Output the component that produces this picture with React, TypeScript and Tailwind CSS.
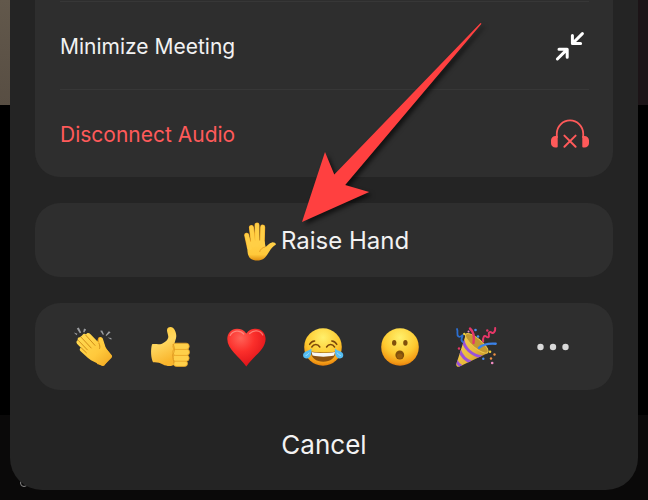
import type { ReactNode } from "react";

function MinimizeIcon() {
  return (
    <svg
      width="38"
      height="38"
      viewBox="0 0 38 38"
      fill="none"
      stroke="#fff"
      strokeWidth="3"
      strokeLinecap="round"
      strokeLinejoin="round"
      aria-hidden="true"
    >
      <path d="M31.4 5.6 22 15M21.4 7.4v8.1h8.2" />
      <path d="M6.4 31 15.8 21.6M8 21.2h8.2v8.1" />
    </svg>
  );
}

function HeadphonesOffIcon() {
  return (
    <svg width="38" height="38" viewBox="0 0 38 38" fill="none" aria-hidden="true">
      <path
        d="M5.8 22v-4.4a13.2 13.2 0 0 1 26.4 0V22"
        stroke="#ff5a5a"
        strokeWidth="1.8"
      />
      <path
        d="M6.7 20H4.5A4.5 4.5 0 0 0 0 24.5v2.7a4.4 4.4 0 0 0 4.4 4.4h1.3a1 1 0 0 0 1-1ZM31.3 20h2.2a4.5 4.5 0 0 1 4.5 4.5v2.7a4.4 4.4 0 0 1-4.4 4.4h-1.3a1 1 0 0 1-1-1Z"
        fill="#ff5a5a"
      />
      <path
        d="m13.4 19.6 11.2 11.2M24.6 19.6 13.4 30.8"
        stroke="#ff5a5a"
        strokeWidth="2"
        strokeLinecap="round"
      />
    </svg>
  );
}

function RaisedHand() {
  return (
    <svg width="34" height="40" viewBox="0 0 34 40" aria-hidden="true">
      <defs>
        <linearGradient id="palm" x1="0" y1="0" x2="0" y2="1">
          <stop offset="0" stopColor="#ffd24a" />
          <stop offset="0.7" stopColor="#ffc83a" />
          <stop offset="1" stopColor="#e09010" />
        </linearGradient>
      </defs>
      <g stroke="#eca524" strokeLinecap="round" strokeWidth="5">
        <path d="m3.7 14.2 2.6 12M8.4 6.4l2 17M14 4l.2 18M19.7 6l-.5 18" />
      </g>
      <path
        d="M4 22c2-2 15-3.5 17.6-1.5l1 5.5c2-1.5 3.4-4 6.4-4.6 2.2-.3 4.6 1.2 3.7 2.4-2.6 1.8-4.4 3.5-6.4 6.7-3 5-5.3 9-12.3 9-6.5 0-9-3.5-9.5-9Z"
        fill="url(#palm)"
      />
      <g stroke="#ffcf46" strokeLinecap="round" strokeWidth="4">
        <path d="m3.7 14.2 3 13M8.4 6.4l2.2 18M14 4l.2 20M19.7 6l-.6 19" />
      </g>
      <path d="M22.2 26c-3 .5-5 2.500-5.600 5" fill="none" stroke="#e9a124" />
    </svg>
  );
}

function Clap() {
  return (
    <>
      <defs>
        <linearGradient id="clap" x1="0" y1="0" x2="1" y2="1">
          <stop offset="0" stopColor="#ffdc55" />
          <stop offset="0.6" stopColor="#ffc93c" />
          <stop offset="1" stopColor="#f0a51f" />
        </linearGradient>
      </defs>
      <path
        d="M23 19 25 11.6c1-2.200 3.600-1.800 4.200.2L32 20l6.400 8.500-7.400 10.500-7-2Z"
        fill="#e9a01c"
      />
      <path
        d="M9.500 8c.8-1.600 2.400-1.700 3.600-.8 1-1.700 3-1.600 4.200-.3l9.200 9.600c-.6-2.500-.9-4.500-.1-5.500 1.200-1.300 3-.6 3.600 1.200l2 6.300c.5 2 1.500 3.700 3 5.300l3.600 4.300c.8 1 .6 2-.2 3l-7 7c-1 1-2 1-3.200.3-4-2.300-9.300-4-13.500-7.600L7.600 24.300c-1.500-1.500-.8-3.300.3-3.600L4.200 17c-1.400-1.400-.8-3.300.6-3.700-.7-2 .6-3.600 2.300-3Z"
        fill="url(#clap)"
      />
      <path
        d="m5.400 13.500 9 9.400M7.900 10 18.200 21M12.600 8l9.400 10.400M8.400 21l5 4.800M26 16.400c1 2 1 3.500.6 5"
        fill="none"
        stroke="#d18d18"
        strokeLinecap="round"
      />
      <path
        d="m.8 5.600 3.600 1.200-.8 1.400ZM3.800 1.600l2-1L8.200 5.600l-1.400.6ZM11 1.600l2.200.8-2 3-1-.4ZM27.200 3.800l2-.2 1.800 4-1.200.2ZM35.800 4.200l1.800 1-4.200 3.800-.8-.8ZM34.600 10.400l3.800.6v1.800Z"
        fill="#9b9da0"
      />
    </>
  );
}

function ThumbsUp() {
  return (
    <>
      <defs>
        <linearGradient id="thumb" x1="0" y1="0" x2="0.3" y2="1">
          <stop offset="0" stopColor="#ffc832" />
          <stop offset="0.5" stopColor="#ffd760" />
          <stop offset="1" stopColor="#f9b52c" />
        </linearGradient>
      </defs>
      <path
        d="M2 17.3c3-.6 7 .6 10-.6 3.500-2 6.300-4 6.300-7 0-2-1.300-4.500-1.300-6.500C17 1 18.500 0 20.500 0c3.500 0 5.800 5 5.800 9 0 3.200-1.800 5.400-1.800 8.500v19.500c-2 3-8 2.300-11.500.5-3.500-1.900-6-2.500-10-2.200-2-4-2.600-12-1-18Z"
        fill="url(#thumb)"
      />
      <g fill="#ffd04a" stroke="#e8a325" strokeWidth="0.8">
        <rect x="23.5" y="33.6" width="14" height="5.8" rx="2.900" />
        <rect x="22.5" y="28" width="16.6" height="6.2" rx="3" />
        <rect x="22.5" y="22" width="17" height="6.4" rx="3.1" />
        <rect x="22.8" y="16.2" width="16.4" height="6.2" rx="3" />
      </g>
      <path d="M23 17c2 4 1.500 8-.4 11 1 3 .8 6 1.400 8.500" fill="none" stroke="#e09a22" />
    </>
  );
}

function Heart() {
  return (
    <>
      <defs>
        <radialGradient id="heart" cx="0.35" cy="0.25" r="0.8">
          <stop offset="0" stopColor="#ff6257" />
          <stop offset="0.45" stopColor="#fb2f2b" />
          <stop offset="1" stopColor="#dc1118" />
        </radialGradient>
      </defs>
      <path
        d="M20.3 6.600C18 2.900 14.800 1.700 11 1.700 5.300 1.700 1.300 6 1.300 12c0 10.400 11.600 17 19 27.400C27.700 29 39.600 22.400 39.600 12c0-6-4-10.300-9.800-10.300-3.700 0-7.100 1.200-9.500 4.900Z"
        fill="url(#heart)"
      />
      <path
        d="M4.200 8.400C6.500 3.400 14 2.400 17.800 7M23.600 6.600C27.500 2.600 34 3 36.800 8"
        fill="none"
        stroke="#ff9d91"
        strokeLinecap="round"
        strokeWidth="1.2"
        opacity="0.7"
      />
    </>
  );
}

function FaceBase() {
  return (
    <>
      <defs>
        <radialGradient id="face" cx="0.5" cy="0.25" r="0.75">
          <stop offset="0" stopColor="#fff06c" />
          <stop offset="0.6" stopColor="#fdc92f" />
          <stop offset="0.9" stopColor="#f39a16" />
          <stop offset="1" stopColor="#e17d0b" />
        </radialGradient>
      </defs>
      <circle cx="20" cy="20" r="18.8" fill="url(#face)" />
    </>
  );
}

function TearsOfJoy() {
  return (
    <>
      <FaceBase />
      <path
        d="M8.800 20c2-3.200 6-3.200 8 0M23.600 20c2-3.200 6-3.200 8 0M6.600 17.400c1-1.700 3-3.100 5-3.300M33.800 17.400c-1-1.700-3-3.100-5-3.300"
        fill="none"
        stroke="#7c4709"
        strokeLinecap="round"
        strokeWidth="1.5"
      />
      <path
        d="M7.600 24.500c8 1.400 17.500 1.400 25.300 0-.3 6.200-5.600 10.300-12.600 10.300S7.900 30.700 7.600 24.500Z"
        fill="#8c5210"
      />
      <path d="M8.600 25c7 1.400 16.600 1.400 23.400 0l-.9 3.600c-6.500 1.400-15 1.400-21.600 0Z" fill="#f8f7f3" />
      <path
        d="M8.300 21.500c.5 3.800-.2 9.800-4.600 10C0 31.600-1 27.600 1.400 25.500c1.600-1.500 4.700-1.700 6.900-4ZM32.100 21.500c-.5 3.800.2 9.800 4.600 10 3.700.1 4.700-3.900 2.300-6-1.600-1.500-4.700-1.700-6.900-4Z"
        fill="#55bdf2"
      />
      <path
        d="M6 26c-.8 1.300-1.600 1.900-3 2.500M34.400 26c.8 1.300 1.600 1.900 3 2.500"
        fill="none"
        stroke="#a9e4ff"
        strokeLinecap="round"
      />
    </>
  );
}

function OpenMouth() {
  return (
    <>
      <FaceBase />
      <g fill="#80500b">
        <ellipse cx="14.2" cy="15.8" rx="2.2" ry="2.9" />
        <ellipse cx="25.4" cy="15.8" rx="2.2" ry="2.9" />
        <ellipse cx="19.8" cy="28" rx="4.4" ry="4.5" />
      </g>
      <ellipse cx="19.8" cy="29" rx="2.8" ry="2.6" fill="#985f0c" />
    </>
  );
}

function PartyPopper() {
  return (
    <>
      <defs>
        <linearGradient id="cone" x1="0" y1="0.3" x2="0.8" y2="1">
          <stop offset="0" stopColor="#f6d052" />
          <stop offset="0.5" stopColor="#e8b93c" />
          <stop offset="1" stopColor="#a8781c" />
        </linearGradient>
        <clipPath id="cone-clip">
          <path d="M10 7 .3 37c-.5 2 1.400 3.400 3.200 2.500L32 26Z" />
        </clipPath>
      </defs>
      <g clipPath="url(#cone-clip)">
        <path d="M0 0h40v42H0Z" fill="url(#cone)" />
        <path
          d="M7 13c1.500 8 8 15 19 17M3.500 23c2 6.500 6.500 10.500 13 13M0 33c1.500 3.500 4 6 8 7.500"
          fill="none"
          stroke="#9a52d8"
          strokeWidth="3"
        />
      </g>
      <ellipse
        cx="20.8"
        cy="16.3"
        rx="14.2"
        ry="4.6"
        transform="rotate(40 20.8 16.3)"
        fill="#c39730"
        stroke="#edc64a"
      />
      <g fill="none" strokeLinecap="round">
        <path
          d="M1 2c1.500 3-1 6 1.500 7.500S7 6.500 6.500 9 4 13 6.800 15"
          stroke="#2c6fd1"
          strokeWidth="1.8"
        />
        <path d="M14 1.500c3.500 3 4.500 8 3.500 14.500" stroke="#e63768" strokeWidth="2.4" />
        <path
          d="M27.200 14.500c-.6-4.500 1.200-6.500 3-5s3.200.8 2.600-2 1.600-3 3-1.800 3.700-1 3.400-4.700"
          stroke="#e63768"
          strokeWidth="2"
        />
        <path d="M23 20.800c4-4 9-4.600 16.700-4.100" stroke="#3b82e8" strokeWidth="2.4" />
      </g>
      <g fill="#4a8ff0">
        <circle cx="19.5" cy="3" r="1.3" />
        <circle cx="22" cy="9.5" r="1.3" />
        <circle cx="27.3" cy="31.7" r="1.2" />
      </g>
      <g fill="#f3d13c">
        <circle cx="8.3" cy="7" r="1.2" />
        <circle cx="34" cy="24.7" r="1.3" />
      </g>
      <g fill="#ef9143">
        <circle cx="38.5" cy="27.5" r="1.2" />
        <circle cx="35" cy="31.5" r="1.2" />
      </g>
      <g fill="#f08bc2">
        <circle cx="36.2" cy="36" r="1.3" />
        <circle cx="12.5" cy="4.5" r="1" />
      </g>
      <g fill="#e63768">
        <circle cx="31.3" cy="3.5" r="1.2" />
        <circle cx="3" cy="21.5" r="1.2" />
      </g>
    </>
  );
}

function MoreDots() {
  return (
    <g fill="#d9d9d9">
      <circle cx="7.5" cy="20" r="3.2" />
      <circle cx="20" cy="20" r="3.2" />
      <circle cx="32.5" cy="20" r="3.2" />
    </g>
  );
}

const reactions: { label: string; art: ReactNode }[] = [
  { label: "Clap", art: <Clap /> },
  { label: "Thumbs up", art: <ThumbsUp /> },
  { label: "Heart", art: <Heart /> },
  { label: "Tears of joy", art: <TearsOfJoy /> },
  { label: "Open mouth", art: <OpenMouth /> },
  { label: "Tada", art: <PartyPopper /> },
  { label: "More reactions", art: <MoreDots /> },
];

// The meeting that stays visible around the edges of the sheet
function MeetingBackdrop() {
  return (
    <div className="col-start-1 row-start-1 flex flex-col bg-black">
      <div className="flex h-[105px] justify-between">
        <div className="w-5 bg-linear-to-b from-[#62584b] to-[#584e43]" />
        <div className="w-5 bg-[#1c1417]" />
      </div>
      <div className="flex-1" />
      <div className="flex h-[85px] items-end bg-[#0a0909] pb-[13px] pl-5">
        <div className="size-2 rounded-full border border-[#8a8a8a]" />
      </div>
    </div>
  );
}

function PointerArrow() {
  return (
    <svg
      width="200"
      height="216"
      viewBox="0 0 200 216"
      className="pointer-events-none absolute top-4 left-1/2 -ml-6 drop-shadow-[3px_3px_2px_rgba(0,0,0,0.6)]"
      aria-hidden="true"
    >
      <path d="M2 206 25 136l9.300 22.500L180.500 7l1 .8L45.200 169l24 7Z" fill="#ff4040" />
    </svg>
  );
}

export default function App() {
  return (
    <div className="relative grid min-h-screen bg-black font-['Inter',sans-serif] text-[#f2f2f2]">
      <MeetingBackdrop />

      <main className="col-start-1 row-start-1 mx-[10px] mb-[10px] flex flex-col gap-[26px] rounded-b-[32px] bg-[#242424] px-[25px]">
        <div className="rounded-b-[25px] bg-[#2e2e2e] pt-px pr-6 pl-[25px]">
          <button className="flex h-[88px] w-full items-center justify-between border-t border-[#373737] pt-0.5 text-[21px]">
            Minimize Meeting
            <MinimizeIcon />
          </button>
          <button className="flex h-[88px] w-full items-center justify-between border-t border-[#373737] pt-0.5 text-[21px] text-[#ff5a5a]">
            Disconnect Audio
            <HeadphonesOffIcon />
          </button>
        </div>

        <button className="flex h-[74px] items-center justify-center gap-1 rounded-[25px] bg-[#2e2e2e] pt-0.5 pl-1 text-2xl">
          <RaisedHand />
          Raise Hand
        </button>

        <div className="flex h-[87px] items-center justify-between rounded-[25px] bg-[#2e2e2e] pr-10 pl-[38px]">
          {reactions.map(({ label, art }) => (
            <button key={label} aria-label={label}>
              <svg
                width="40"
                height="40"
                viewBox="0 0 40 40"
                className="block overflow-visible"
                aria-hidden="true"
              >
                {art}
              </svg>
            </button>
          ))}
        </div>

        <button className="mb-5 h-[54px] pt-0.5 text-[26px]">Cancel</button>
      </main>

      <PointerArrow />
    </div>
  );
}
